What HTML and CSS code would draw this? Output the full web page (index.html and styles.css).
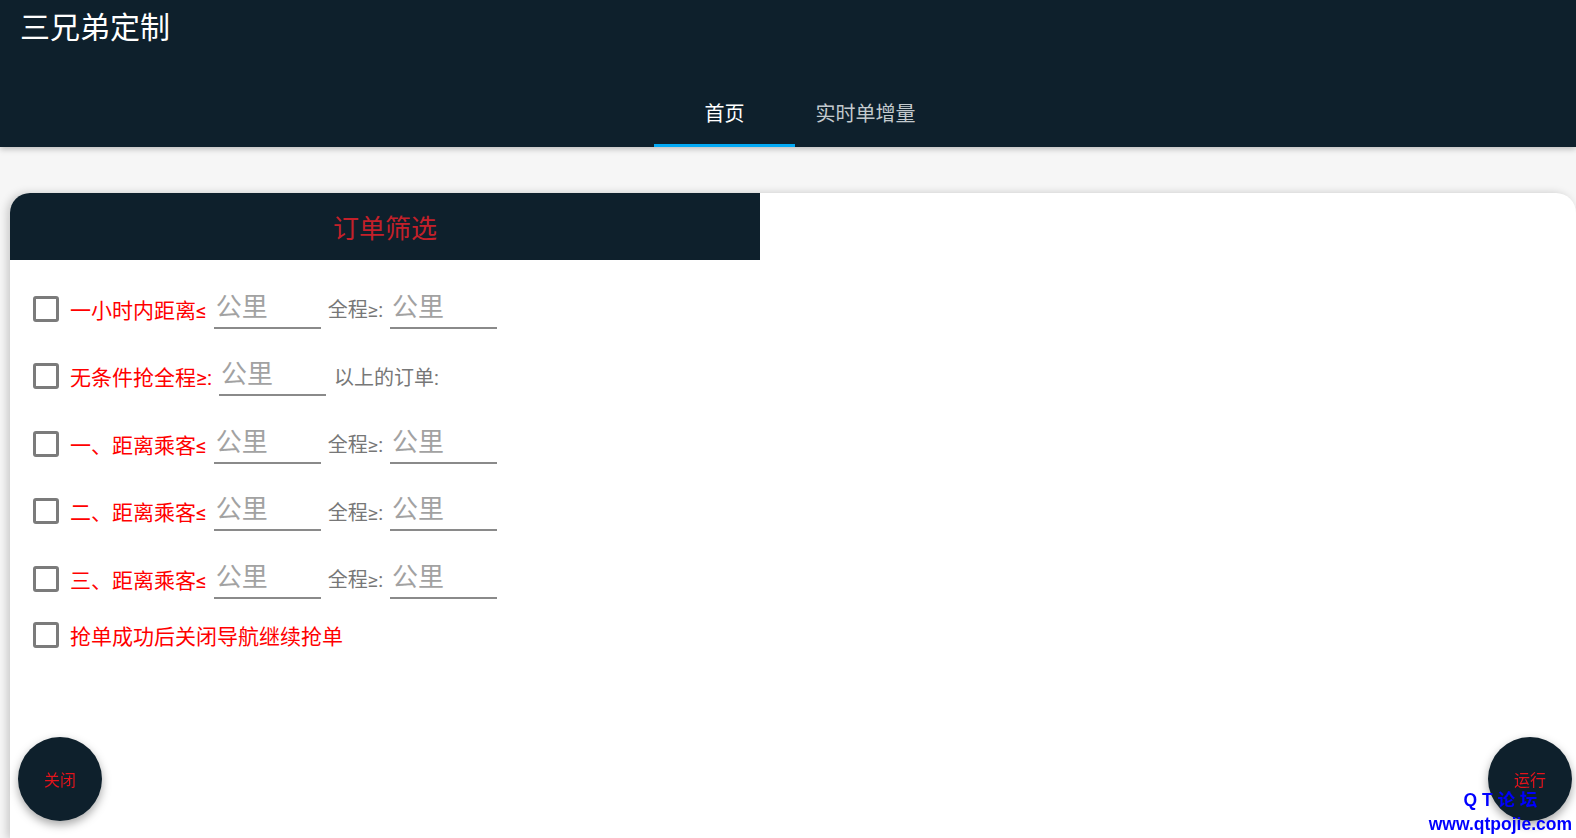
FILE: index.html
```html
<!DOCTYPE html>
<html lang="zh-CN">
<head>
  <meta charset="UTF-8" />
  <meta name="viewport" content="width=device-width, initial-scale=1.0"/>
  <title>三兄弟定制</title>
  <link rel="stylesheet" href="styles.css">
</head>
<body>

  <header class="appbar">
    <div class="title">三兄弟定制</div>
    <nav class="tabs">
      <div class="tab active">首页</div>
      <div class="tab">实时单增量</div>
    </nav>
  </header>

  <main class="page">
    <section class="card">
      <div class="card-head">订单筛选</div>
      <div class="card-body">
        <div class="row">
          <input type="checkbox" class="check">
          <span class="label">一小时内距离≤</span>
          <input class="field" placeholder="公里">
          <span class="hint">全程≥:</span>
          <input class="field" placeholder="公里">
        </div>
        <div class="row">
          <input type="checkbox" class="check">
          <span class="label">无条件抢全程≥:</span>
          <input class="field" placeholder="公里">
          <span class="hint wide">以上的订单:</span>
        </div>
        <div class="row">
          <input type="checkbox" class="check">
          <span class="label">一、距离乘客≤</span>
          <input class="field" placeholder="公里">
          <span class="hint">全程≥:</span>
          <input class="field" placeholder="公里">
        </div>
        <div class="row">
          <input type="checkbox" class="check">
          <span class="label">二、距离乘客≤</span>
          <input class="field" placeholder="公里">
          <span class="hint">全程≥:</span>
          <input class="field" placeholder="公里">
        </div>
        <div class="row">
          <input type="checkbox" class="check">
          <span class="label">三、距离乘客≤</span>
          <input class="field" placeholder="公里">
          <span class="hint">全程≥:</span>
          <input class="field" placeholder="公里">
        </div>
        <div class="row short">
          <input type="checkbox" class="check">
          <span class="label">抢单成功后关闭导航继续抢单</span>
        </div>
      </div>
    </section>
  </main>

  <button class="fab fab-left">关闭</button>
  <button class="fab fab-right">运行</button>

  <div class="watermark">
    <div>Q T 论 坛</div>
    <div>www.qtpojie.com</div>
  </div>

</body>
</html>
```

FILE: styles.css
```css
body {
  margin: 0;
  height: 838px;
  overflow: hidden;
  background-color: #f6f6f6;
  font-family: Roboto, "Noto Sans CJK SC", sans-serif;
}
.appbar {
  position: relative;
  z-index: 1;
  height: 147px;
  display: flex;
  flex-direction: column;
  background-color: #0e202c;
  box-shadow: 0 2px 6px rgba(0, 0, 0, 0.25);
}
.title {
  flex: 1;
  padding: 8px 20px 0;
  font-size: 30px;
  line-height: 40px;
  color: #fff;
}
.tabs {
  display: flex;
  justify-content: center;
  height: 70px;
  padding-left: 14px;
}
.tab {
  width: 141px;
  display: flex;
  align-items: center;
  justify-content: center;
  box-sizing: border-box;
  border-top: 3px solid transparent;
  border-bottom: 3px solid transparent;
  font-size: 20px;
  color: #c3cace;
}
.tab.active {
  color: #fff;
  border-bottom-color: #03a9f4;
}
.page {
  padding-top: 46px;
}
.card {
  margin-left: 10px;
  height: 646px;
  background-color: #fff;
  border-radius: 20px 20px 0 0;
  box-shadow: -3px 0 8px rgba(0, 0, 0, 0.18);
}
.card-head {
  width: 750px;
  height: 67px;
  display: flex;
  align-items: center;
  justify-content: center;
  background-color: #0e202c;
  border-top-left-radius: 20px;
  color: #c4202a;
  font-size: 26px;
}
.card-body {
  padding: 15px 0 0 23px;
}
.row {
  display: flex;
  align-items: center;
  height: 67.5px;
}
.row.short {
  height: 45px;
}
.check {
  appearance: none;
  -webkit-appearance: none;
  width: 26px;
  height: 26px;
  margin: 0 11px 0 0;
  box-sizing: border-box;
  border: 3px solid #7b7b7b;
  border-radius: 3px;
  background: #fff;
}
.label {
  margin-right: 7px;
  font-size: 21px;
  color: #ff0000;
}
.field {
  width: 107px;
  height: 40px;
  margin-right: 7px;
  padding: 0 0 2px 2px;
  box-sizing: border-box;
  border: none;
  border-bottom: 2px solid #8a8a8a;
  background: transparent;
  outline: none;
  font-family: Roboto, "Noto Sans CJK SC", sans-serif;
  font-size: 26px;
  color: #333;
}
.field::placeholder {
  color: #a2a2a2;
}
.hint {
  margin-right: 7px;
  font-size: 20px;
  color: #777;
}
.hint.wide {
  margin-left: 1px;
}
.fab {
  position: fixed;
  bottom: 17px;
  width: 84px;
  height: 84px;
  padding: 0;
  border: none;
  border-radius: 50%;
  background-color: #0e202c;
  color: #e3141c;
  font-family: Roboto, "Noto Sans CJK SC", sans-serif;
  font-size: 16px;
  box-shadow: 0 4px 10px rgba(0, 0, 0, 0.35);
}
.fab-left {
  left: 18px;
}
.fab-right {
  right: 4px;
}
.watermark {
  position: fixed;
  right: 4px;
  bottom: 2px;
  z-index: 2;
  text-align: center;
  font-family: "Liberation Sans", "Noto Sans CJK SC", sans-serif;
  font-weight: bold;
  font-size: 17.5px;
  line-height: 24px;
  color: #0000ff;
}
```
